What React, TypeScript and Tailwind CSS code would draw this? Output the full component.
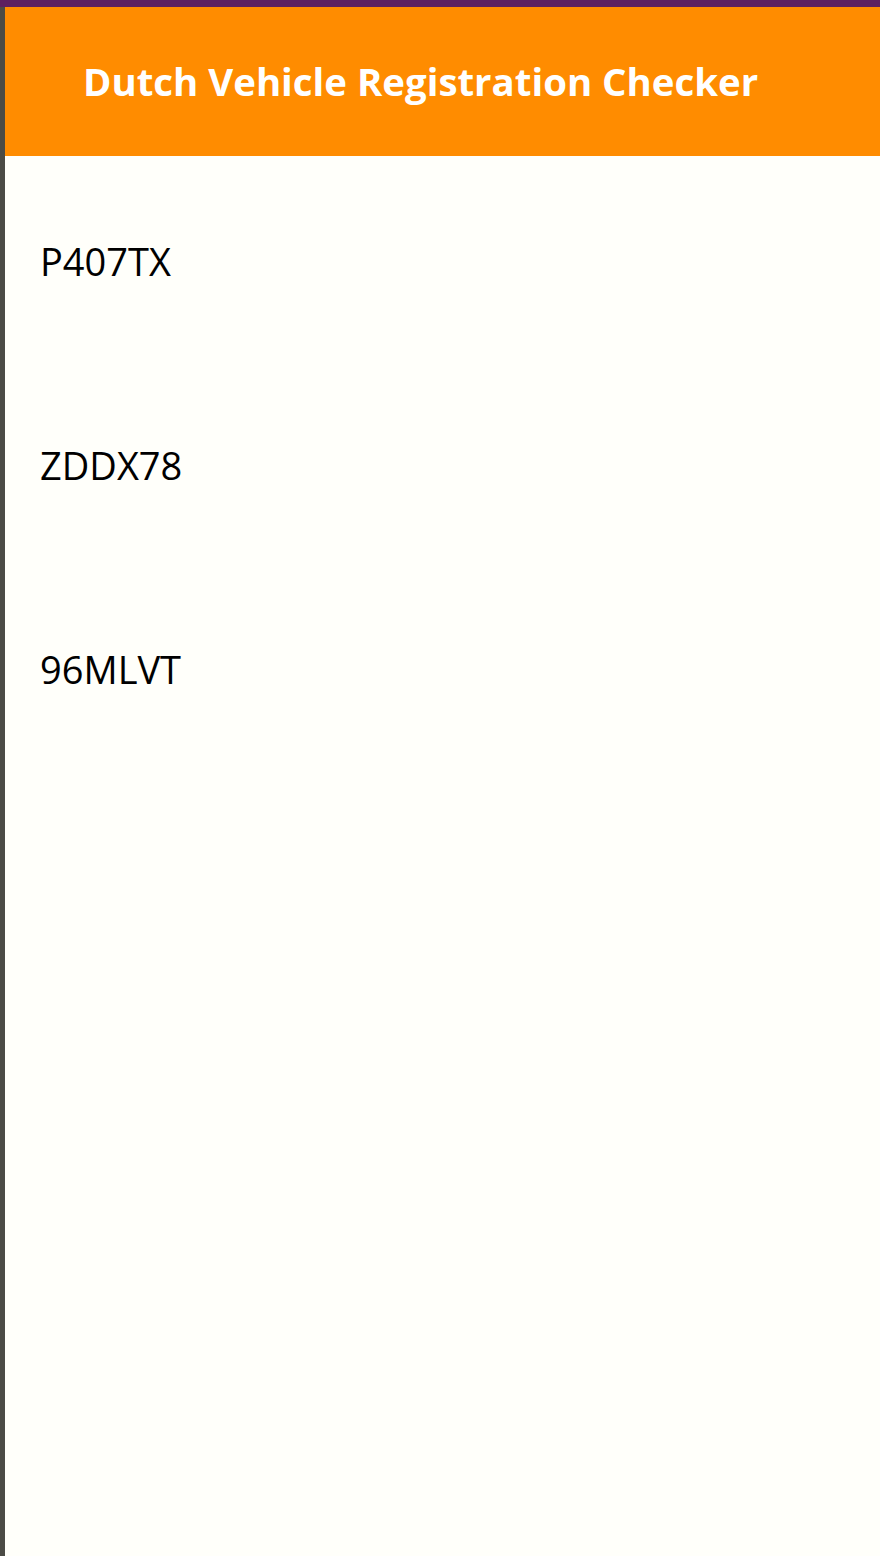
export default function App() {
  const plates = ['P407TX', 'ZDDX78', '96MLVT'];
  return (
    <div className="min-h-[1556px] flex flex-col bg-[#5e2060] pt-[7px]" style={{ fontFamily: '"Open Sans", sans-serif' }}>
      <div className="flex flex-1 flex-col bg-[#4b4b45] pl-[5px]">
        <header className="h-[149px] bg-[#ff8c00] flex items-center pl-[78px]">
          <h1 className="text-[38.4px] font-bold text-white leading-none">Dutch Vehicle Registration Checker</h1>
        </header>
        <main className="flex-1 bg-[#fffffa] pt-[80px] pl-[35px] flex flex-col gap-[154px]">
          {plates.map(p => (
            <div key={p} className="text-[38px] text-black leading-[50px]">{p}</div>
          ))}
        </main>
      </div>
    </div>
  );
}
